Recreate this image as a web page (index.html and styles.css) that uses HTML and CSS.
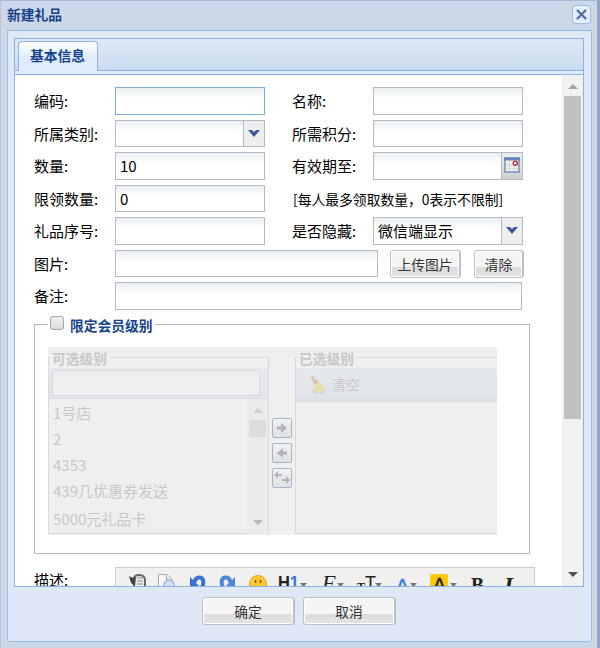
FILE: index.html
```html
<!DOCTYPE html>
<html lang="zh-CN">
<head>
<meta charset="utf-8">
<title>新建礼品</title>
<link rel="stylesheet" href="styles.css">
</head>
<body>
<div class="window">
  <header class="titlebar">
    <h1 class="title">新建礼品</h1>
    <button class="close" aria-label="关闭"><svg width="20" height="20" viewBox="0 0 20 20"><rect x=".7" y=".7" width="17.6" height="17.6" rx="2.5" fill="#dcebff" stroke="#8fb4e6"/><rect x="2" y="2" width="15" height="15" rx="1.5" fill="none" stroke="#fff"/><path d="M5 5l9 9M14 5l-9 9" stroke="#4a66a4" stroke-width="2"/></svg></button>
  </header>
  <main class="body">
    <section class="panel">
      <nav class="tabs"><div class="tab">基本信息</div></nav>
      <div class="tab-spacer"></div>
      <div class="viewport">
        <form class="form">
          <div class="fields">
            <label class="label">编码:</label><div class="input focus"></div><label class="label second">名称:</label><div class="input"></div>
            <label class="label">所属类别:</label><div class="input short"><span class="value"></span><span class="trigger"><svg width="12" height="8" viewBox="0 0 12 8"><path d="M0 0h4l2 2 2-2h4L6 7z" fill="#3a5a98"/></svg></span></div><label class="label second">所需积分:</label><div class="input short"></div>
            <label class="label">数量:</label><div class="input"><span class="value">10</span></div><label class="label second">有效期至:</label><div class="input"><span class="value"></span><span class="trigger date"><svg width="16" height="16" viewBox="0 0 16 16"><rect x="1" y="1" width="14" height="14" fill="#f4f2f0" stroke="#7898c0" stroke-width="1.6"/><path d="M0 2h16" stroke="#6488b8" stroke-width="3"/><path d="M5.500 4v10M10 4v10M2 8h12M2 11.500h12" stroke="#d4d6d8"/><circle cx="11.300" cy="6.300" r="2" fill="#fff" stroke="#b83038" stroke-width="1.400"/></svg></span></div>
            <label class="label">限领数量:</label><div class="input short"><span class="value">0</span></div><span class="hint">[每人最多领取数量，0表示不限制]</span>
            <label class="label">礼品序号:</label><div class="input"></div><label class="label second">是否隐藏:</label><div class="input"><span class="value">微信端显示</span><span class="trigger"><svg width="12" height="8" viewBox="0 0 12 8"><path d="M0 0h4l2 2 2-2h4L6 7z" fill="#3a5a98"/></svg></span></div>
            <label class="label">图片:</label><div class="wide"><div class="input picture"></div><button type="button" class="button upload">上传图片</button><button type="button" class="button clear">清除</button></div>
            <label class="label">备注:</label><div class="wide"><div class="input remark"></div></div>
          </div>
          <fieldset class="levels">
            <legend class="levels-legend"><span class="checkbox"></span>限定会员级别</legend>
            <div class="selector">
              <fieldset class="list-box available">
                <legend>可选级别</legend>
                <div class="toolbar search"><div class="input"></div></div>
                <div class="list">
                  <ul><li>1号店</li><li>2</li><li>4353</li><li>439几优惠券发送</li><li class="last">5000元礼品卡</li></ul>
                  <div class="scrollbar small"><i class="arrow up"></i><i class="thumb"></i><i class="arrow down"></i></div>
                </div>
              </fieldset>
              <div class="moves">
                <span class="move"><svg width="12" height="12" viewBox="0 0 12 12"><path d="M1 4.500h4V1l6 5-6 5V7.500H1z"/></svg></span>
                <span class="move"><svg width="12" height="12" viewBox="0 0 12 12"><path d="M11 4.500H7V1L1 6l6 5V7.500h4z"/></svg></span>
                <span class="move"><svg width="16" height="14" viewBox="0 0 16 14"><path d="M0 4l4-4v3h4v2H4v3zM16 9l-4-4v3H8v2h4v3z"/></svg></span>
              </div>
              <fieldset class="list-box chosen">
                <legend>已选级别</legend>
                <div class="toolbar empty"><svg width="17" height="20" viewBox="0 0 17 20"><ellipse cx="9" cy="17.500" rx="7" ry="1.800" fill="#d2d5d8"/><path d="M1.500 1.500l4 8" stroke="#dcc7b0" stroke-width="3"/><path d="M4.500 9.500L8.500 7l7.500 8-7 4q-4-1-5.500-5z" fill="#e4dfad"/><path d="M4 9.500l4-3" stroke="#dfb9b5" stroke-width="2.500"/></svg><span>清空</span></div>
              </fieldset>
            </div>
          </fieldset>
          <div class="description">
            <label class="label">描述:</label>
            <div class="editor">
              <svg width="418" height="18" viewBox="0 0 418 18">
                <path d="M18 18v-7q0-4 5-4t6 4v7" fill="#eee" stroke="#666" stroke-width="2"/><path d="M13 8q4 3 7 1l-1 9-4-3z" fill="#444"/><path d="M21 10h6M21 13h6M21 16h6" stroke="#888"/>
                <path d="M42.500 18V6.500H51l5 5V18" fill="#f8f8f8" stroke="#aaa"/><path d="M50.500 7v5H56" fill="#eee" stroke="#aaa"/><circle cx="53" cy="17" r="5" fill="#cfe2f8" stroke="#a5b8d4" stroke-width="1.500"/>
                <path d="M78 16q1-7 6-6.500 5 1 2.500 9" fill="none" stroke="#3973d2" stroke-width="4"/><path d="M74 9v10h10z" fill="#3973d2"/>
                <path d="M115 16q-1-7-6-6.500-5 1-2.500 9" fill="none" stroke="#4d86df" stroke-width="4"/><path d="M119 9v10h-10z" fill="#4d86df"/>
                <circle cx="142" cy="16" r="8.500" fill="#ffc92c" stroke="#e5a31d"/><path d="M139.500 12v3M144.500 12v3" stroke="#765012" stroke-width="1.500"/>
                <text x="162" y="21" class="heading" textLength="21" lengthAdjust="spacingAndGlyphs">H<tspan fill="#3b77d5">1</tspan></text>
                <text x="206" y="22" class="script">F</text>
                <text x="241" y="23" class="size-small">T</text><text x="249" y="22" class="size" textLength="11" lengthAdjust="spacingAndGlyphs">T</text>
                <text x="280" y="24" class="color">A</text>
                <rect x="314" y="6" width="18" height="20" rx="2" fill="#ffc90b"/><text x="317" y="23" class="highlight">A</text>
                <text x="355" y="25" class="bold" textLength="13" lengthAdjust="spacingAndGlyphs">B</text><text x="388" y="25" class="italic">I</text>
                <path d="M184 15h7l-3.500 4zM221 15h7l-3.500 4zM259 15h7l-3.500 4zM294 15h7l-3.500 4zM334 15h7l-3.500 4z" fill="#777"/>
              </svg>
            </div>
          </div>
        </form>
        <div class="scrollbar"><i class="arrow up"></i><i class="thumb"></i><i class="arrow down"></i></div>
      </div>
    </section>
    <footer class="actions"><button class="button">确定</button><button class="button">取消</button></footer>
  </main>
</div>
</body>
</html>
```
FILE: styles.css
```css
* { box-sizing: border-box; }
body { margin: 0; font: 15px/20px "Noto Sans CJK SC", sans-serif; color: #000; overflow: hidden; }
button { font: inherit; margin: 0; padding: 0; }
fieldset { min-width: 0; margin: 0; padding: 0; }
svg { display: block; flex: none; }
.window { width: 600px; height: 648px; padding: 0 5px 6px 6px; background: #ccd8e7; border-top: 1px solid #a3b8d3; border-right: 3px solid #8ca5c8; border-left: 1px solid #b4c6dd; }
.titlebar { height: 29px; display: flex; justify-content: space-between; align-items: flex-start; }
.title { margin: 3px 0 0; font-size: 13.75px; line-height: 20px; font-weight: 700; color: #15428b; }
.close { width: 20px; height: 20px; margin: 4px 0 0; border: 0; background: none; }
.body { height: 612px; padding: 7px 7px 0 6px; background: #dfe8f6; border: 1px solid #99bbe8; border-radius: 0 0 3px 3px; }
.panel { height: 549px; border: 1px solid #8db2e3; display: flex; flex-direction: column; }
.tabs { height: 32px; flex: none; padding: 2px 0 0 3px; background: linear-gradient(#dde8f5, #cbdbef); border-bottom: 1px solid #8db2e3; }
.tab { width: 80px; height: 30px; padding-right: 1px; border: 1px solid #8db2e3; border-bottom: 0; border-radius: 4px 4px 0 0; background: linear-gradient(#fff, #deecfd 55%); color: #15428b; font-weight: 700; font-size: 13.75px; line-height: 27px; text-align: center; }
.tab-spacer { height: 4px; flex: none; background: #deecfd; border-bottom: 1px solid #8db2e3; }
.viewport { flex: 1; min-height: 0; display: flex; background: #fff; overflow: hidden; }
.form { width: 547px; padding: 12px 0 0 19px; }
.fields { display: grid; grid-template-columns: 81px 150px 27px 81px 150px; grid-template-rows: 33px 32px 33px 32px 33px 32px 28px; }
.label { line-height: 27px; white-space: nowrap; }
.second { grid-column: 4; }
.input { height: 28px; border: 1px solid #b5b8c8; background: linear-gradient(#e9eeee, #fff 10px); display: flex; }
.input.short { height: 27px; }
.input.focus { border-color: #7eadd9; }
.value { flex: 1; padding-left: 4px; line-height: 26px; white-space: nowrap; }
.trigger { width: 21px; border-left: 1px solid #b5b8c8; background: #eee; display: grid; justify-items: center; align-content: start; padding-top: 9px; }
.date { background: linear-gradient(#eee, #d0d0d0); padding-top: 4px; }
.hint { grid-column: 4 / 6; padding-left: 1px; font-size: 13.8px; line-height: 28px; white-space: nowrap; }
.wide { grid-column: 2 / 6; display: flex; align-items: flex-start; }
.picture { width: 263px; height: 27px; margin-right: 12px; }
.remark { width: 407px; }
.button { height: 28px; border: 1px solid #bcc0c7; border-radius: 3px; box-shadow: inset 0 0 0 1px #fff, 1px 0 0 #b4bfce; background: linear-gradient(#f5f5f5 0 62%, #dcdcdc 62%, #e4e4e4); color: #333; font-size: 13.75px; line-height: 25px; text-align: center; }
.upload { width: 70px; margin-right: 14px; }
.clear { width: 49px; }
.levels { width: 496px; height: 239px; margin-top: 5px; border: 1px solid #b5b8c8; padding: 0 0 0 13px; }
.levels-legend { height: 18px; padding: 0 2px; display: flex; align-items: flex-start; color: #15428b; font-size: 13.75px; font-weight: 700; line-height: 21px; }
.checkbox { width: 14px; height: 14px; margin: 1px 6px 0 0; border: 1px solid #a6a6a6; border-radius: 3px; background: linear-gradient(#eee, #dcdcdc); }
.selector { width: 449px; height: 188px; margin-top: 14px; background: #efefef; display: flex; overflow: hidden; color: #c8c8c8; }
.list-box { border: 1px solid #d8dae0; height: 187px; }
.list-box legend { margin-left: 1px; padding: 0 2px; height: 21px; font-weight: 700; font-size: 13.75px; line-height: 22px; }
.available { width: 221px; }
.toolbar { background: linear-gradient(#e5e9ee, #e0e4ea); border-bottom: 1px solid #d7dde7; }
.search { height: 31px; padding: 2px 0 0 3px; }
.search .input { width: 208px; height: 26px; border-color: #d8dae0; background: linear-gradient(#eaeaea, #efefef 8px); }
.list { height: 135px; display: flex; overflow: hidden; }
ul { list-style: none; flex: 1; margin: 0; padding: 1px 0 0 4px; }
li { height: 26px; line-height: 26px; white-space: nowrap; }
.last { line-height: 29px; }
.moves { width: 26px; padding: 71px 0 0 3px; display: flex; flex-direction: column; gap: 5px; }
.move { width: 20px; height: 20px; border: 1px solid #a3b5ca; border-radius: 2px; background: linear-gradient(#f1f1f1, #e0e1e4); display: grid; place-items: center; }
.move path { fill: #b4b4b4; }
.chosen { width: 203px; border-right: 0; margin-right: -1px; }
.empty { height: 34px; display: flex; align-items: center; padding: 0 0 2px 14px; gap: 5px; font-size: 13.75px; }
.scrollbar { width: 21px; padding-left: 2px; background: #f1f1f1; display: flex; flex-direction: column; }
.arrow { width: 0; height: 0; border: 5px solid transparent; margin-left: 4px; flex: none; }
.up { border-top: 0; border-bottom-color: #a3a3a3; margin-top: 9px; margin-bottom: 7px; }
.down { border-bottom: 0; border-top-color: #505050; margin-top: auto; margin-bottom: 9px; }
.thumb { width: 17px; height: 323px; background: #c1c1c1; }
.small { background: #ebebeb; }
.small .thumb { height: 17px; background: #dcdcdc; }
.small .up { border-bottom-color: #d0d0d0; }
.small .down { border-top-color: #b8b8b8; }
.description { display: flex; margin-top: 13px; }
.description .label { width: 81px; line-height: 26px; }
.editor { width: 420px; height: 40px; border: 1px solid #ccc; background: #f0f0ee; }
.editor svg { overflow: hidden; }
.editor text { font-family: "Liberation Sans", sans-serif; font-weight: 700; fill: #222; }
.editor .heading { font-size: 18px; }
.editor .script { font-family: "Liberation Serif", serif; font-style: italic; font-size: 22px; font-weight: 400; }
.editor .size-small { font-family: "Liberation Serif", serif; font-size: 12px; }
.editor .size { font-size: 20px; font-weight: 400; }
.editor .color { font-size: 19px; font-weight: 400; fill: #3e7ee0; stroke: #3e7ee0; stroke-width: .6px; }
.editor .highlight { font-size: 19px; font-weight: 400; stroke: #222; stroke-width: .5px; }
.editor .bold { font-family: "Liberation Serif", serif; font-size: 23px; }
.editor .italic { font-family: "Liberation Serif", serif; font-style: italic; font-size: 23px; }
.actions { display: flex; justify-content: center; gap: 9px; padding: 10px 1px 0 0; }
.actions .button { width: 92px; }
```
